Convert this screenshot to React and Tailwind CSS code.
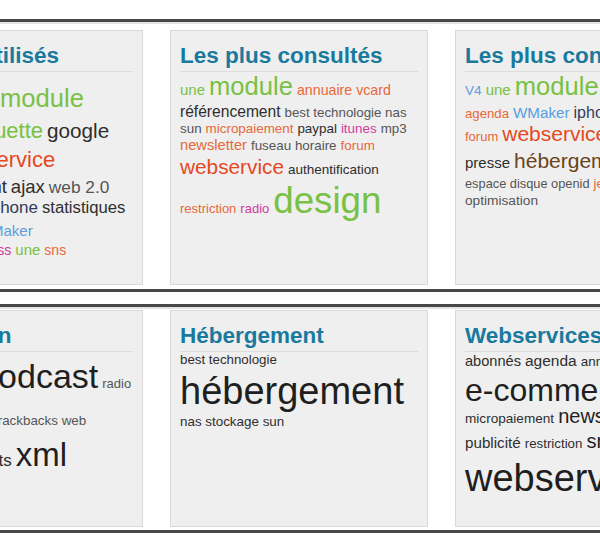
const G = 'text-[#79c143]'
const O = 'text-[#e8683a]'
const R = 'text-[#e4491f]'
const M = 'text-[#cf3a9e]'
const D = 'text-[#2e2e2e]'
const K = 'text-[#1f1f1f]'
const S = 'text-[#555555]'
const B = 'text-[#5b9ddf]'
const N = 'text-[#2f3d5c]'
const W = 'text-[#6a4418]'

const rows = [
  {
    rowClass: 'pt-[8px] pb-[4px]',
    panelClass: 'h-[255px]',
    panels: [
      {
        title: 'Les plus utilisés',
        width: 'w-[269px]',
        pad: 'pt-[3px]',
        lines: [
          { h: 'h-[45px]', words: [['design', 'text-[38px]', G], ['module', 'text-[25.6px]', G]] },
          { h: 'h-[29px]', words: [['newsletter', 'text-[15.5px]', O], ['étiquette', 'text-[22px]', G], ['google', 'text-[20.7px]', D]] },
          { h: 'h-[29px]', words: [['restriction', 'text-[13.2px]', O], ['webservice', 'text-[22px]', R]] },
          { h: 'h-[21px]', words: [['paypal', 'text-[14.5px]', S], ['paiement', 'text-[18.5px]', D], ['ajax', 'text-[18.5px]', D], ['web 2.0', 'text-[17.3px]', S]] },
          { h: 'h-[24px]', words: [['hébergement', 'text-[16.8px]', W], ['iphone', 'text-[17px]', N], ['statistiques', 'text-[16.7px]', D]] },
          { h: 'h-[19px]', words: [['fuseau horaire', 'text-[13.9px]', S], ['WMaker', 'text-[15px]', B]] },
          { h: '', words: [['optimisation', 'text-[13.4px]', S], ['mp3', 'text-[15px]', S], ['rss', 'text-[14px]', M], ['une', 'text-[15px]', G], ['sns', 'text-[14px]', O]] },
        ],
      },
      {
        title: 'Les plus consultés',
        width: 'w-[258px]',
        pad: 'pt-[2px]',
        lines: [
          { h: 'h-[30px]', words: [['une', 'text-[15px]', G], ['module', 'text-[25.6px]', G], ['annuaire vcard', 'text-[14.2px]', O]] },
          { h: 'h-[18px]', words: [['référencement', 'text-[15.6px]', D], ['best technologie nas', 'text-[13.3px]', S]] },
          { h: 'h-[16px]', words: [['sun', 'text-[13.4px]', S], ['micropaiement', 'text-[13.4px]', O], ['paypal', 'text-[13.4px]', D], ['itunes', 'text-[13.4px]', M], ['mp3', 'text-[13.4px]', S]] },
          { h: 'h-[19px]', words: [['newsletter', 'text-[14.7px]', O], ['fuseau horaire', 'text-[13.4px]', S], ['forum', 'text-[13.4px]', O]] },
          { h: 'h-[26px]', words: [['webservice', 'text-[20.8px]', R], ['authentification', 'text-[13.5px]', D]] },
          { h: '', words: [['restriction', 'text-[13px]', O], ['radio', 'text-[13px]', M], ['design', 'text-[36.7px]', G]] },
        ],
      },
      {
        title: 'Les plus connus',
        width: 'w-[258px]',
        pad: 'pt-[2px]',
        lines: [
          { h: 'h-[31px]', words: [['V4', 'text-[13.6px]', B], ['une', 'text-[15px]', G], ['module', 'text-[25.6px]', G], ['vcard', 'text-[14px]', O]] },
          { h: 'h-[18px]', words: [['agenda', 'text-[13.2px]', O], ['WMaker', 'text-[15.2px]', B], ['iphone', 'text-[16px]', N], ['newsletter', 'text-[14px]', O]] },
          { h: 'h-[27px]', words: [['forum', 'text-[13px]', O], ['webservice', 'text-[21px]', R]] },
          { h: 'h-[27px]', words: [['presse', 'text-[15px]', D], ['hébergement', 'text-[21px]', W]] },
          { h: 'h-[17px]', words: [['espace disque openid', 'text-[12.8px]', S], ['jeux', 'text-[13.4px]', O]] },
          { h: '', words: [['optimisation', 'text-[13.7px]', S]] },
        ],
      },
    ],
  },
  {
    rowClass: 'mt-[12px] pt-[3px] pb-[3px]',
    panelClass: 'h-[217px]',
    panels: [
      {
        title: 'Syndication',
        width: 'w-[269px]',
        pad: 'pt-[2px]',
        lines: [
          { h: 'h-[60px]', words: [['atom', 'text-[41px]', K], ['podcast', 'text-[34px]', K], ['radio', 'text-[13px]', S]] },
          { h: 'h-[24px]', words: [['rss', 'text-[13.4px]', S], ['commentaires', 'text-[13.4px]', S], ['trackbacks web', 'text-[13.4px]', S]] },
          { h: '', words: [['syndication', 'text-[13.4px]', S], ['formats', 'text-[17px]', D], ['xml', 'text-[33px]', K]] },
        ],
      },
      {
        title: 'Hébergement',
        width: 'w-[258px]',
        pad: 'pt-[1px]',
        lines: [
          { h: 'h-[19px]', words: [['best technologie', 'text-[13.3px]', D]] },
          { h: 'h-[43px]', words: [['hébergement', 'text-[38px]', K]] },
          { h: '', words: [['nas stockage sun', 'text-[13.4px]', D]] },
        ],
      },
      {
        title: 'Webservices',
        width: 'w-[258px]',
        pad: 'pt-[1px]',
        lines: [
          { h: 'h-[21px]', words: [['abonnés', 'text-[14.6px]', D], ['agenda', 'text-[15.5px]', D], ['annuaire', 'text-[13.4px]', D]] },
          { h: 'h-[32px]', words: [['e-commerce', 'text-[32px]', K]] },
          { h: 'h-[25px]', words: [['micropaiement', 'text-[13.6px]', D], ['newsletter', 'text-[20px]', K]] },
          { h: 'h-[28px]', words: [['publicité', 'text-[15.2px]', D], ['restriction', 'text-[13.3px]', D], ['sns', 'text-[20px]', K]] },
          { h: '', words: [['webservice', 'text-[38px]', K]] },
        ],
      },
    ],
  },
]

function Panel({ panel, heightClass }) {
  return (
    <div className={`${panel.width} ${heightClass} shrink-0 overflow-hidden border border-[#d9d9d9] bg-[#efefef] px-[9px]`}>
      {/* Title with thin rule under it */}
      <h2 className="pt-[11px] pb-[1px] border-b border-[#dcdcdc] text-[22.5px] leading-[28px] font-bold text-[#1a7a9e] whitespace-nowrap">
        {panel.title}
      </h2>
      <div className={panel.pad}>
        {panel.lines.map((line, i) => (
          <div key={i} className={`${line.h} flex items-baseline gap-1 whitespace-nowrap`}>
            {line.words.map(([text, size, color], j) => (
              <a key={j} href="#" className={`${size} ${color} shrink-0 leading-none hover:underline`}>
                {text}
              </a>
            ))}
          </div>
        ))}
      </div>
    </div>
  )
}

export default function App() {
  return (
    <div className="w-[600px] h-[546px] overflow-hidden bg-white pt-[19px] font-['Liberation_Sans',Arial,sans-serif]">
      {rows.map((row, i) => (
        <div key={i} className={`${row.rowClass} border-y-[3px] border-[#484848] shadow-[inset_0_2px_0_#e4e4e4]`}>
          <div className="flex gap-[27px] ml-[-126px]">
            {row.panels.map((p, j) => (
              <Panel key={j} panel={p} heightClass={row.panelClass} />
            ))}
          </div>
        </div>
      ))}
    </div>
  )
}
